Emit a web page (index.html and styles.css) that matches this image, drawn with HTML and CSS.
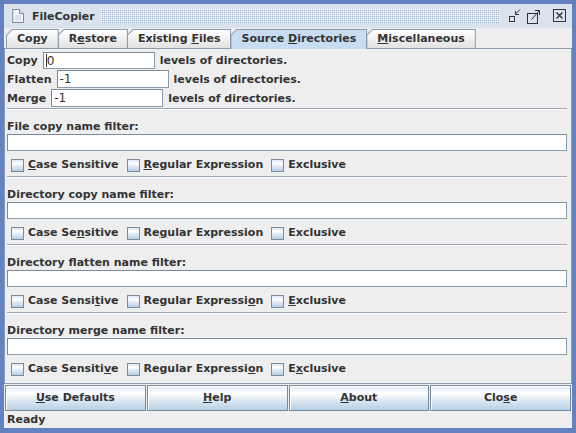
FILE: index.html
```html
<!DOCTYPE html>
<html>
<head>
<meta charset="utf-8">
<link rel="stylesheet" href="styles.css">
</head>
<body>
<div class="frame">
  <div class="titlebar">
    <svg class="appicon" width="16" height="16" viewBox="0 0 16 16">
      <path d="M2.5 1.5h7l4 4v9h-11z" fill="#f3f5f8" stroke="#7d8a99"/>
      <path d="M9.5 1.5v4h4" fill="#dfe6ee" stroke="#7d8a99"/>
      <path d="M3 2v12" stroke="#a9bcd4"/>
      <path d="M5 8h6M5 10h6M5 12h6" stroke="#c3cfdc"/>
    </svg>
    <span class="title">FileCopier</span>
    <div class="bumps"></div>
    <svg class="winbtns" width="62" height="16" viewBox="0 0 62 16" fill="none" stroke="#333">
      <rect x="3.5" y="8.5" width="5" height="5"/>
      <path d="M14 1.5L9.5 6"/>
      <path d="M9.5 3v3.5h3.5"/>
      <rect x="21.5" y="5.5" width="10" height="10"/>
      <path d="M25.5 11.5L33 3"/>
      <path d="M29 2.5h4.5v4.5"/>
      <rect x="47.5" y="1.5" width="12" height="12"/>
      <path d="M50.5 4.5l6 6M56.5 4.5l-6 6" stroke-width="1.4"/>
    </svg>
  </div>
  <div class="tabs">
    <div class="tab"><div class="tab-in"><span>Co<u>p</u>y</span></div></div>
    <div class="tab"><div class="tab-in"><span>R<u>e</u>store</span></div></div>
    <div class="tab"><div class="tab-in"><span>Existing <u>F</u>iles</span></div></div>
    <div class="tab selected"><div class="tab-in"><span>Source <u>D</u>irectories</span></div></div>
    <div class="tab"><div class="tab-in"><span><u>M</u>iscellaneous</span></div></div>
  </div>
  <div class="panel">
    <div class="row"><span class="lbl">Copy</span><div class="field short"><span class="caret"></span>0</div><span class="lbl">levels of directories.</span></div>
    <div class="row"><span class="lbl">Flatten</span><div class="field short">-1</div><span class="lbl">levels of directories.</span></div>
    <div class="row"><span class="lbl">Merge</span><div class="field short">-1</div><span class="lbl">levels of directories.</span></div>

    <div class="sep"></div>
    <div class="section">
      <div class="flabel">File copy name filter:</div>
      <div class="field wide"></div>
      <div class="checks">
        <div class="check"><span class="box"></span><span><u>C</u>ase Sensitive</span></div>
        <div class="check"><span class="box"></span><span><u>R</u>egular Expression</span></div>
        <div class="check"><span class="box"></span><span>Exclusive</span></div>
      </div>
    </div>

    <div class="sep"></div>
    <div class="section">
      <div class="flabel">Directory copy name filter:</div>
      <div class="field wide"></div>
      <div class="checks">
        <div class="check"><span class="box"></span><span>Case Se<u>n</u>sitive</span></div>
        <div class="check"><span class="box"></span><span>Re<u>g</u>ular Expression</span></div>
        <div class="check"><span class="box"></span><span>Exclusive</span></div>
      </div>
    </div>

    <div class="sep"></div>
    <div class="section">
      <div class="flabel">Directory flatten name filter:</div>
      <div class="field wide"></div>
      <div class="checks">
        <div class="check"><span class="box"></span><span>Case Sensi<u>t</u>ive</span></div>
        <div class="check"><span class="box"></span><span>Regular Expressi<u>o</u>n</span></div>
        <div class="check"><span class="box"></span><span><u>E</u>xclusive</span></div>
      </div>
    </div>

    <div class="sep"></div>
    <div class="section">
      <div class="flabel">Directory merge name filter:</div>
      <div class="field wide"></div>
      <div class="checks">
        <div class="check"><span class="box"></span><span>Case Sensiti<u>v</u>e</span></div>
        <div class="check"><span class="box"></span><span>Regular Expressi<u>o</u>n</span></div>
        <div class="check"><span class="box"></span><span>E<u>x</u>clusive</span></div>
      </div>
    </div>
  </div>
  <div class="buttons">
    <div class="btn"><span><u>U</u>se Defaults</span></div>
    <div class="btn"><span><u>H</u>elp</span></div>
    <div class="btn"><span><u>A</u>bout</span></div>
    <div class="btn"><span>Clo<u>s</u>e</span></div>
  </div>
  <div class="status">Ready</div>
</div>
</body>
</html>
```
FILE: styles.css
```css
html, body {
  margin: 0;
  padding: 0;
}
body {
  width: 576px;
  height: 433px;
  overflow: hidden;
  font: bold 11px "DejaVu Sans", sans-serif;
  color: #333;
}
u {
  text-decoration: underline;
  text-underline-offset: 1px;
}
.frame {
  box-sizing: border-box;
  width: 576px;
  height: 433px;
  background: #6382bf;
  padding: 4px 4px 5px 4px;
  display: flex;
  flex-direction: column;
}
.titlebar {
  flex: none;
  height: 24px;
  display: flex;
  align-items: center;
  padding-left: 6px;
  background: #d9e2ed;
}
.appicon {
  flex: none;
}
.title {
  margin-left: 6px;
  color: #333;
}
.bumps {
  flex: 1;
  height: 14px;
  margin: 0 6px 0 6px;
  background-color: #d9e2ed;
  background-image:
    radial-gradient(circle at 0.5px 0.5px, #ffffff 0.6px, transparent 0.7px),
    radial-gradient(circle at 1.5px 1.5px, #a3b6cd 0.6px, transparent 0.7px);
  background-size: 2px 2px;
}
.winbtns {
  flex: none;
  margin-right: 4px;
}
.tabs {
  flex: none;
  height: 20px;
  display: flex;
  align-items: flex-end;
  padding-left: 2px;
  background: #eeeeee;
}
.tab {
  box-sizing: border-box;
  height: 19px;
  padding: 1px 1px 0 1px;
  background: #8c9bab;
  clip-path: polygon(6px 0, 100% 0, 100% 100%, 0 100%, 0 6px);
  margin-right: -1px;
}
.tab-in {
  height: 18px;
  padding: 0 10px;
  display: flex;
  align-items: center;
  line-height: 14px;
  background: linear-gradient(#ffffff, #e2e2e2);
  clip-path: polygon(5.4px 0, 100% 0, 100% 100%, 0 100%, 0 5.4px);
}
.tab.selected {
  position: relative;
  z-index: 1;
  height: 20px;
  margin-bottom: -1px;
}
.tab.selected .tab-in {
  height: 19px;
  padding-bottom: 1px;
  box-sizing: border-box;
  background: #c8ddf2;
}
.panel {
  flex: none;
  box-sizing: border-box;
  height: 336px;
  border: 1px solid #8c9bab;
  padding: 2px 4px 3px 2px;
  background: #eeeeee;
}
.row {
  height: 19px;
  display: flex;
  align-items: center;
  gap: 5px;
}
.lbl {
  line-height: 14px;
}
.field {
  box-sizing: border-box;
  background: #fff;
  border: 1px solid #8c9bab;
  border-top-color: #7a8a99;
  border-left-color: #7a8a99;
  font: 12px "DejaVu Sans", sans-serif;
  color: #333;
  padding-left: 2px;
  display: flex;
  align-items: center;
}
.field.short {
  width: 112px;
  height: 18px;
  align-self: flex-start;
}
.row:first-child .field.short {
  margin-top: 1px;
  height: 17px;
}
.caret {
  width: 1px;
  height: 13px;
  background: #333;
}
.field.wide {
  height: 17px;
}
.sep {
  border-top: 1px solid #98a5b3;
  border-bottom: 1px solid #ffffff;
}
.section {
  padding: 10px 0 2px 0;
}
.flabel {
  line-height: 14px;
}
.checks {
  display: flex;
  height: 18px;
  align-items: center;
  margin-top: 5px;
}
.check {
  display: flex;
  align-items: center;
  gap: 4px;
  padding: 0 4px;
  line-height: 14px;
}
.box {
  box-sizing: border-box;
  width: 13px;
  height: 13px;
  border: 1px solid #7a8a99;
  background: linear-gradient(#dde8f3 0%, #ffffff 30%, #dde8f3 60%, #b8cfe5 100%);
}
.buttons {
  flex: none;
  height: 27px;
  box-sizing: border-box;
  padding: 1px 1px 0 1px;
  display: grid;
  grid-template-columns: repeat(4, 1fr);
  gap: 1px;
  background: #eeeeee;
}
.btn {
  box-sizing: border-box;
  border: 1px solid #7a8a99;
  box-shadow: inset 1px 1px 0 #fff;
  background: linear-gradient(#dde8f3 0%, #ffffff 30%, #dde8f3 60%, #b8cfe5 100%);
  display: flex;
  align-items: center;
  justify-content: center;
  line-height: 14px;
}
.status {
  flex: none;
  height: 17px;
  line-height: 17px;
  padding-left: 3px;
  background: #eeeeee;
}
```
